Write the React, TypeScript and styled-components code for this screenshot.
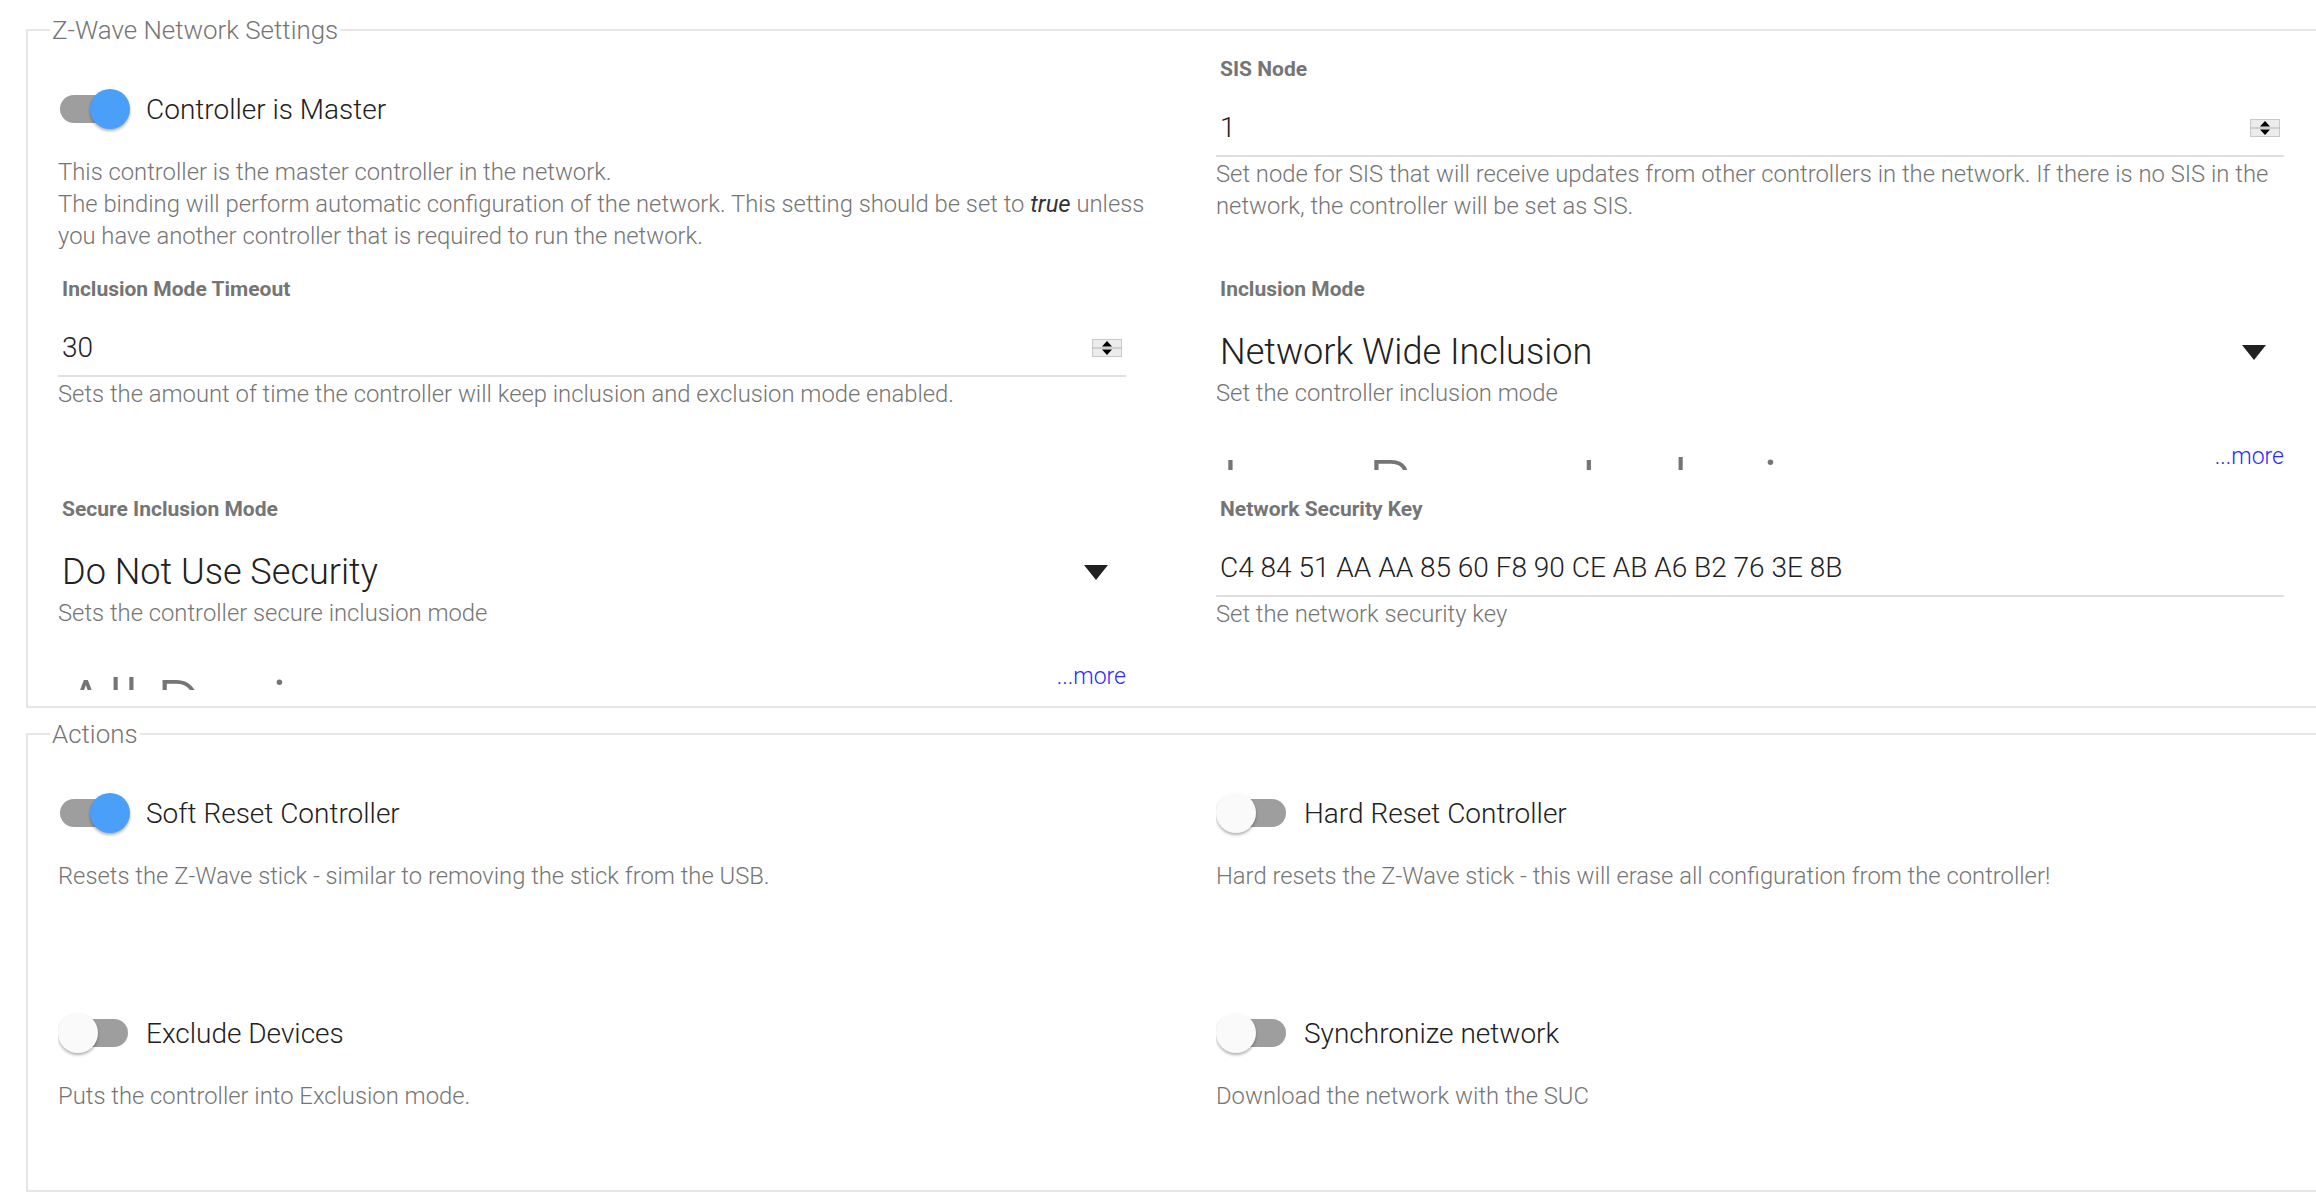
import React from "react";
import styled, { createGlobalStyle } from "styled-components";

const GlobalStyle = createGlobalStyle`
  html, body {
    margin: 0;
    padding: 0;
    background: #ffffff;
    overflow: hidden;
  }
  body {
    font-family: Roboto, "Noto Sans", "Liberation Sans", Arial, sans-serif;
    color: #212121;
  }
`;

const Page = styled.div`
  padding: 16px 0 0 26px;
  width: 2500px;
`;

const FieldSet = styled.fieldset<{ $mt?: number }>`
  margin: ${(p) => p.$mt ?? 0}px 0 0 0;
  border: 2px solid #e6e6e6;
  padding: 0 0 16px 30px;
  width: 2400px;
  box-sizing: border-box;
  min-width: 0;
`;

const Legend = styled.legend`
  margin-left: -8px;
  padding: 0 2px;
  font-size: 25.9px;
  line-height: 28px;
  font-weight: 300;
  color: #757575;
`;

const Grid = styled.div`
  display: grid;
  grid-template-columns: 1110px 1110px;
  column-gap: 48px;
  row-gap: 14px;
  grid-auto-rows: 206px;
`;

const Cell = styled.div`
  position: relative;
  overflow: hidden;
  height: 206px;
`;

const FieldLabel = styled.div`
  margin-top: 13px;
  padding-left: 4px;
  font-size: 21px;
  line-height: 24px;
  font-weight: 700;
  color: #757575;
`;

const InputRow = styled.div`
  margin-top: 22px;
  width: 1068px;
  height: 54px;
  box-sizing: border-box;
  border-bottom: 2px solid #e0e0e0;
  padding: 0 4px 3px 4px;
  display: flex;
  align-items: center;
  justify-content: space-between;
`;

const InputValue = styled.span`
  font-size: 28px;
  font-weight: 300;
  color: #212121;
`;

const SelectRow = styled.div`
  margin-top: 27px;
  width: 1068px;
  height: 48px;
  box-sizing: border-box;
  padding: 0 18px 0 4px;
  display: flex;
  align-items: center;
  justify-content: space-between;
`;

const SelectValue = styled.span`
  font-size: 36.1px;
  font-weight: 300;
  color: #212121;
`;

const Caret = styled.span`
  width: 0;
  height: 0;
  border-left: 12px solid transparent;
  border-right: 12px solid transparent;
  border-top: 15px solid #212121;
`;

const Desc = styled.div<{ $mt: number }>`
  margin-top: ${(p) => p.$mt}px;
  font-size: 23.8px;
  line-height: 32px;
  font-weight: 300;
  color: #757575;

  em {
    font-style: italic;
    color: #333333;
    font-weight: 400;
  }
`;

const Options = styled.div`
  margin-top: 36px;
  padding-left: 6px;
  font-size: 70px;
  font-weight: 300;
  color: #757575;
  white-space: nowrap;
`;

const MoreLink = styled.a`
  position: absolute;
  right: 42px;
  bottom: -2px;
  font-size: 23px;
  line-height: 30px;
  font-weight: 300;
  color: #2a2aff;
  text-decoration: none;
`;

const ToggleRow = styled.div`
  margin-top: 45px;
  height: 40px;
  display: flex;
  align-items: center;
  gap: 16px;
`;

const Switch = styled.span`
  position: relative;
  flex: none;
  width: 72px;
  height: 40px;
`;

const Track = styled.span`
  position: absolute;
  left: 2px;
  top: 6px;
  width: 68px;
  height: 28px;
  border-radius: 14px;
  background: #9e9e9e;
`;

const Thumb = styled.span<{ $on: boolean }>`
  position: absolute;
  top: 0;
  left: ${(p) => (p.$on ? 32 : 0)}px;
  width: 40px;
  height: 40px;
  border-radius: 50%;
  background: ${(p) => (p.$on ? "#4a9ff8" : "#fafafa")};
  box-shadow: 0 2px 3px rgba(0, 0, 0, 0.3);
`;

const ToggleLabel = styled.span`
  font-size: 28px;
  font-weight: 300;
  color: #212121;
`;

const Spinner = () => (
  <svg width="30" height="18" viewBox="0 0 30 18">
    <rect x="0.5" y="0.5" width="29" height="17" fill="#ececec" stroke="#c8c8c8" />
    <line x1="0.5" y1="9" x2="29.5" y2="9" stroke="#b4b4b4" />
    <polygon points="15,2 10,7.5 20,7.5" fill="#000" />
    <polygon points="10,10.5 20,10.5 15,16" fill="#000" />
  </svg>
);

type ToggleProps = { on: boolean; label: string; children: React.ReactNode };

const ToggleCell = ({ on, label, children }: ToggleProps) => (
  <Cell>
    <ToggleRow>
      <Switch>
        <Track />
        <Thumb $on={on} />
      </Switch>
      <ToggleLabel>{label}</ToggleLabel>
    </ToggleRow>
    <Desc $mt={27}>{children}</Desc>
  </Cell>
);

type InputProps = { label: string; value: string; spinner?: boolean; children: React.ReactNode };

const InputCell = ({ label, value, spinner, children }: InputProps) => (
  <Cell>
    <FieldLabel>{label}</FieldLabel>
    <InputRow>
      <InputValue>{value}</InputValue>
      {spinner && <Spinner />}
    </InputRow>
    <Desc $mt={1}>{children}</Desc>
  </Cell>
);

type SelectProps = { label: string; value: string; options: string[]; children: React.ReactNode };

const SelectCell = ({ label, value, options, children }: SelectProps) => (
  <Cell>
    <FieldLabel>{label}</FieldLabel>
    <SelectRow>
      <SelectValue>{value}</SelectValue>
      <Caret />
    </SelectRow>
    <Desc $mt={1}>{children}</Desc>
    <Options>
      {options.map((o) => (
        <div key={o}>{o}</div>
      ))}
    </Options>
    <MoreLink href="#">...more</MoreLink>
  </Cell>
);

export default function App() {
  return (
    <>
      <GlobalStyle />
      <Page>
        <FieldSet>
          <Legend>Z-Wave Network Settings</Legend>
          <Grid>
            <ToggleCell on label="Controller is Master">
              This controller is the master controller in the network.
              <br />
              The binding will perform automatic configuration of the network. This setting should be set to{" "}
              <em>true</em> unless
              <br />
              you have another controller that is required to run the network.
            </ToggleCell>
            <InputCell label="SIS Node" value="1" spinner>
              Set node for SIS that will receive updates from other controllers in the network. If there is no SIS in the
              <br />
              network, the controller will be set as SIS.
            </InputCell>
            <InputCell label="Inclusion Mode Timeout" value="30" spinner>
              Sets the amount of time the controller will keep inclusion and exclusion mode enabled.
            </InputCell>
            <SelectCell
              label="Inclusion Mode"
              value="Network Wide Inclusion"
              options={["Low Power Inclusion", "High Power Inclusion", "Network Wide Inclusion"]}
            >
              Set the controller inclusion mode
            </SelectCell>
            <SelectCell
              label="Secure Inclusion Mode"
              value="Do Not Use Security"
              options={["All Devices", "Entry Control Devices", "Do Not Use Security"]}
            >
              Sets the controller secure inclusion mode
            </SelectCell>
            <InputCell label="Network Security Key" value="C4 84 51 AA AA 85 60 F8 90 CE AB A6 B2 76 3E 8B">
              Set the network security key
            </InputCell>
          </Grid>
        </FieldSet>
        <FieldSet $mt={12}>
          <Legend>Actions</Legend>
          <Grid>
            <ToggleCell on label="Soft Reset Controller">
              Resets the Z-Wave stick - similar to removing the stick from the USB.
            </ToggleCell>
            <ToggleCell on={false} label="Hard Reset Controller">
              Hard resets the Z-Wave stick - this will erase all configuration from the controller!
            </ToggleCell>
            <ToggleCell on={false} label="Exclude Devices">
              Puts the controller into Exclusion mode.
            </ToggleCell>
            <ToggleCell on={false} label="Synchronize network">
              Download the network with the SUC
            </ToggleCell>
          </Grid>
        </FieldSet>
      </Page>
    </>
  );
}
